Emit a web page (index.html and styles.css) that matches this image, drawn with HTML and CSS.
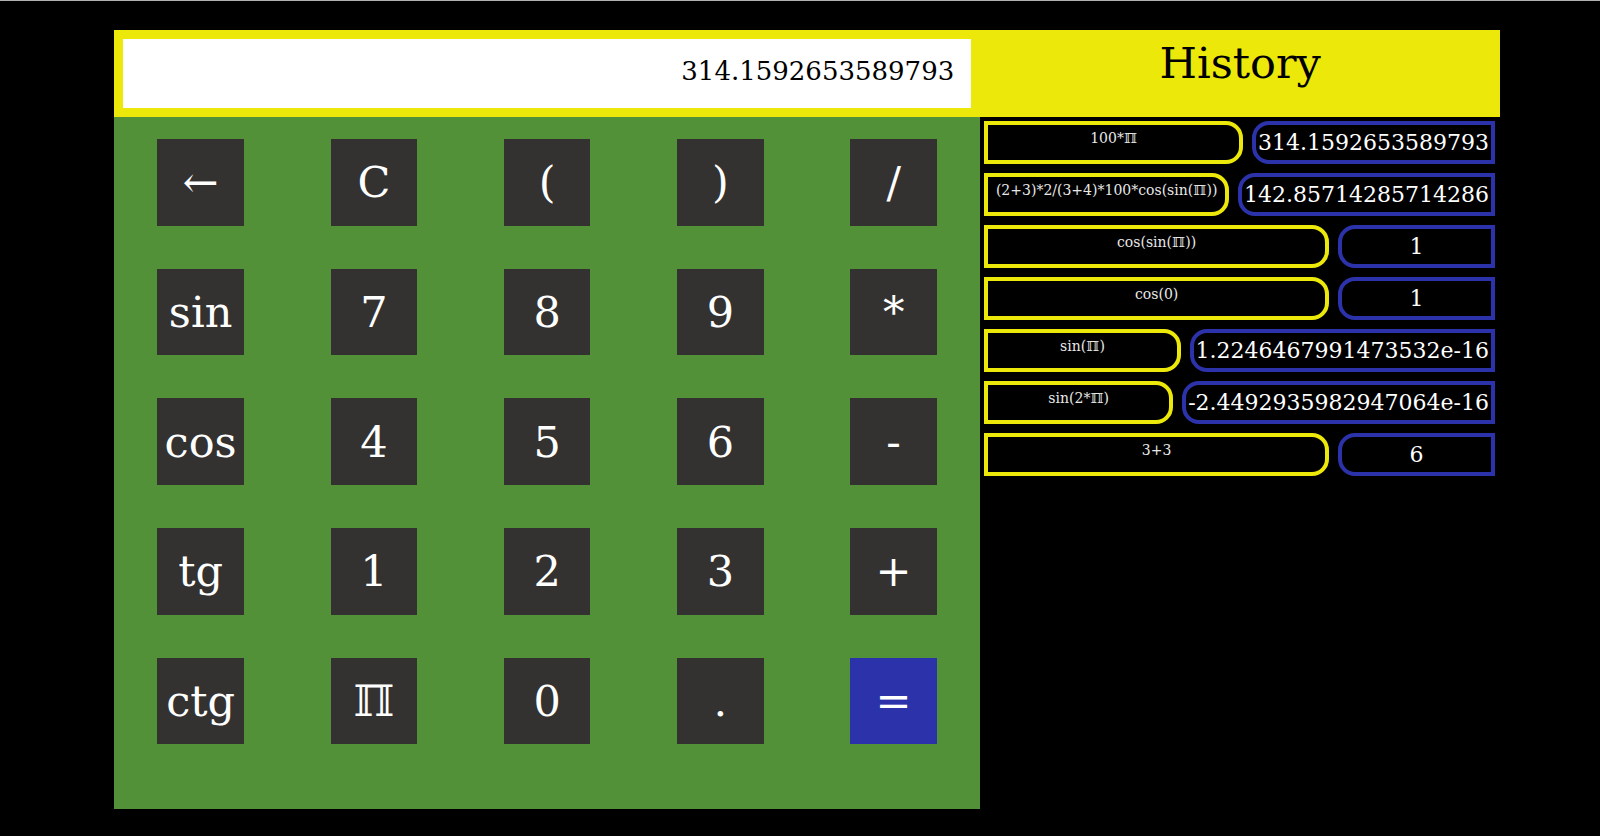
FILE: index.html
```html
<!DOCTYPE html>
<html lang="en">
<head>
<meta charset="utf-8">
<title>Calculator</title>
<meta name="viewport" content="width=device-width, initial-scale=1">
<link rel="stylesheet" href="styles.css">
</head>
<body>
<main class="app">
  <section class="calculator" aria-label="Calculator">
    <div class="screen">
      <input class="display" type="text" aria-label="Expression" value="314.1592653589793">
    </div>
    <div class="keypad">
      <button class="key" type="button" aria-label="Backspace">←</button>
      <button class="key" type="button">C</button>
      <button class="key" type="button">(</button>
      <button class="key" type="button">)</button>
      <button class="key" type="button">/</button>
      <button class="key" type="button">sin</button>
      <button class="key" type="button">7</button>
      <button class="key" type="button">8</button>
      <button class="key" type="button">9</button>
      <button class="key" type="button">*</button>
      <button class="key" type="button">cos</button>
      <button class="key" type="button">4</button>
      <button class="key" type="button">5</button>
      <button class="key" type="button">6</button>
      <button class="key" type="button">-</button>
      <button class="key" type="button">tg</button>
      <button class="key" type="button">1</button>
      <button class="key" type="button">2</button>
      <button class="key" type="button">3</button>
      <button class="key" type="button">+</button>
      <button class="key" type="button">ctg</button>
      <button class="key" type="button">ℿ</button>
      <button class="key" type="button">0</button>
      <button class="key" type="button">.</button>
      <button class="key key-equals" type="button">=</button>
    </div>
  </section>
  <section class="history">
    <h1 class="history-title">History</h1>
    <ul class="history-list">
      <li class="entry"><span class="expression">100*ℿ</span><span class="result">314.1592653589793</span></li>
      <li class="entry"><span class="expression">(2+3)*2/(3+4)*100*cos(sin(ℿ))</span><span class="result">142.85714285714286</span></li>
      <li class="entry"><span class="expression">cos(sin(ℿ))</span><span class="result">1</span></li>
      <li class="entry"><span class="expression">cos(0)</span><span class="result">1</span></li>
      <li class="entry"><span class="expression">sin(ℿ)</span><span class="result">1.2246467991473532e-16</span></li>
      <li class="entry"><span class="expression">sin(2*ℿ)</span><span class="result">-2.4492935982947064e-16</span></li>
      <li class="entry"><span class="expression">3+3</span><span class="result">6</span></li>
    </ul>
  </section>
</main>
</body>
</html>
```
FILE: styles.css
```css
:root {
  --yellow: #ece80a;
  --green: #529138;
  --blue: #2c33aa;
  --dark: #333230;
}

* {
  box-sizing: border-box;
}

body {
  margin: 0;
  border-top: 1px solid #b0b2b0;
  background: #000;
  font-family: "DejaVu Serif", serif;
}

.app {
  display: flex;
  padding: 29px 100px 26px 114px;
}

.calculator {
  flex: 5 1 0;
  min-width: 0;
  background: var(--green);
}

.screen {
  display: flex;
  height: 87px;
  padding: 9px;
  background: var(--yellow);
}

.display {
  flex: 1;
  min-width: 0;
  padding: 0 17px 6px;
  border: 0;
  background: #fff;
  color: #000;
  font: 26px "DejaVu Serif", serif;
  text-align: right;
}

.keypad {
  display: grid;
  grid-template-columns: repeat(5, 1fr);
  justify-items: center;
  row-gap: 43px;
  padding: 22px 0 65px;
}

.key {
  width: 50%;
  aspect-ratio: 1;
  padding: 0;
  border: 0;
  background: var(--dark);
  color: #fff;
  font: 43px "DejaVu Serif", serif;
}

.key-equals {
  background: var(--blue);
}

.history {
  flex: 3 1 0;
  min-width: 0;
}

.history-title {
  height: 87px;
  margin: 0;
  padding-top: 8px;
  background: var(--yellow);
  color: #000;
  font-size: 43px;
  font-weight: 400;
  line-height: 50px;
  text-align: center;
}

.history-list {
  display: flex;
  flex-direction: column;
  gap: 9px;
  margin: 0;
  padding: 4px 5px 4px 4px;
  list-style: none;
}

.entry {
  display: flex;
  gap: 9px;
  height: 43px;
  color: #fff;
  text-align: center;
}

.expression {
  flex: 1;
  min-width: 0;
  padding-top: 5px;
  border: 4px solid var(--yellow);
  border-radius: 0 17px 17px 0;
  color: #e8e8e8;
  font-size: 14px;
  line-height: 17px;
  white-space: nowrap;
}

.result {
  min-width: 157px;
  padding: 0 2px;
  border: 4px solid var(--blue);
  border-radius: 17px 0 0 17px;
  font-size: 22px;
  line-height: 36px;
}
```
